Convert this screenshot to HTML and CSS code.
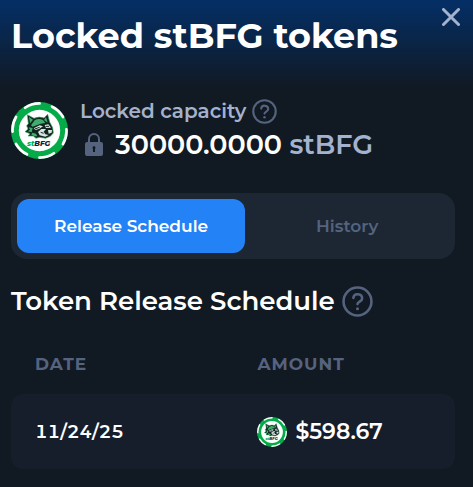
FILE: index.html
```html
<!DOCTYPE html>
<html lang="en">

<head>
	<meta charset="UTF-8">
	<meta name="viewport" content="width=device-width, initial-scale=1">
	<title>Locked stBFG tokens</title>
	<link rel="stylesheet" href="styles.css">
</head>

<body>
	<!-- Shared icons -->
	<svg class="sprite" aria-hidden="true">
		<symbol id="token" viewBox="9 9 171 171">
			<circle cx="94.5" cy="94.5" r="85.5" fill="#05ab48" />
			<g fill="none" stroke="#fff" stroke-width="8" stroke-linecap="round">
				<path id="dash" d="M132 23 Q152 32 165 54" />
				<use href="#dash" transform="rotate(60 94.5 94.5)" />
				<use href="#dash" transform="rotate(120 94.5 94.5)" />
				<use href="#dash" transform="rotate(180 94.5 94.5)" />
				<use href="#dash" transform="rotate(240 94.5 94.5)" />
				<use href="#dash" transform="rotate(300 94.5 94.5)" />
			</g>
			<circle cx="94.5" cy="94.5" r="62" fill="#fff" />
			<path fill="#12241f" stroke="#27b561" stroke-width="2" stroke-linejoin="round" d="M58 47 L78 58 Q94 51 108 57 L119 46 L125 69 L134 86 L136 102 L127 112 L113 118 L94 115 L84 118 L76 111 L60 111 L66 104 L51 98 L60 90 L56 80 L61 74 Z" />
			<path fill="#3fae6c" d="M63 54 L75 62 L66 73 Z M114 54 L119 71 L108 63 Z M80 64 Q92 57 105 63 L112 72 L98 74 L74 83 L69 79 Z M62 85 L74 87 L71 100 L59 97 L66 92 Z M73 101 L84 104 L88 112 L80 112 L70 107 Z" />
			<path fill="#d9e6e0" d="M77 88 L95 79 L105 82 L93 90 L82 93 Z M110 78 L121 76 L129 86 L114 87 Z M90 99 L100 90 L114 90 L107 98 L112 106 L122 108 L112 113 L95 109 Z M120 93 L132 93 L131 101 L122 104 Z" />
			<path fill="none" stroke="#12241f" stroke-width="3" d="M80 90 L95 85 M113 82 L123 82 M98 100 L107 103" />
			<text class="token-text" x="57" y="142"><tspan fill="#05ab48">st</tspan><tspan fill="#17202a">BFG</tspan></text>
		</symbol>
		<symbol id="help" viewBox="0 0 30 30">
			<g fill="none" stroke="currentColor" stroke-width="2.500" stroke-linecap="round" stroke-linejoin="round">
				<circle cx="15" cy="15" r="13.500" />
				<path d="M11 11.500 C11.500 6.500 19.500 7 19.500 12 C19.500 15 15 15 15 17.500" />
			</g>
			<circle cx="15" cy="22" r="1.500" fill="currentColor" />
		</symbol>
	</svg>

	<main class="modal">
		<header class="modal-header">
			<h1>Locked stBFG tokens</h1>
			<button class="close" type="button" aria-label="Close">
				<svg viewBox="0 0 18 18"><path d="M1.500 1.500 L16.500 16.500 M16.500 1.500 L1.500 16.500" /></svg>
			</button>
		</header>

		<section class="capacity">
			<svg class="token-large" aria-hidden="true"><use href="#token" /></svg>
			<div>
				<div class="capacity-label">
					<span>Locked capacity</span>
					<button class="help" type="button" aria-label="About locked capacity">
						<svg><use href="#help" /></svg>
					</button>
				</div>
				<div class="capacity-value">
					<svg class="lock" viewBox="0 0 18 24" aria-hidden="true">
						<path d="M4 10 V6 A5 5 0 0 1 14 6 V10" fill="none" stroke="#55637f" stroke-width="2" />
						<rect x="0" y="9" width="18" height="14" rx="2" fill="#55637f" />
						<path d="M9 13 A1.800 1.800 0 0 1 10 16 V19 H8 V16 A1.800 1.800 0 0 1 9 13 Z" fill="#111922" />
					</svg>
					<span><strong>30000.0000</strong> stBFG</span>
				</div>
			</div>
		</section>

		<nav class="tabs">
			<button class="tab active" type="button">Release Schedule</button>
			<button class="tab" type="button">History</button>
		</nav>

		<section class="schedule">
			<div class="schedule-title">
				<h2>Token Release Schedule</h2>
				<button class="help help-large" type="button" aria-label="About the release schedule">
					<svg><use href="#help" /></svg>
				</button>
			</div>
			<table>
				<thead>
					<tr>
						<th class="date" scope="col">Date</th>
						<th scope="col">Amount</th>
					</tr>
				</thead>
				<tbody>
					<tr>
						<td class="date">11/24/25</td>
						<td>
							<div class="amount">
								<svg class="token-small" aria-hidden="true"><use href="#token" /></svg>
								<span>$598.67</span>
							</div>
						</td>
					</tr>
				</tbody>
			</table>
		</section>
	</main>
</body>

</html>
```

FILE: styles.css
```css
* {
	box-sizing: border-box;
}

body {
	margin: 0;
	background: #111922;
	color: #fff;
	font-family: "Montserrat", "Inter", sans-serif;
}

h1,
h2 {
	margin: 0;
}

button {
	padding: 0;
	border: 0;
	background: none;
	font-family: inherit;
	cursor: pointer;
}

svg {
	display: block;
}

.sprite {
	position: absolute;
	width: 0;
	height: 0;
}

.modal {
	padding: 0 18px 18px 11px;
	background: linear-gradient(#042f66, #111922 90px);
}

.modal-header {
	display: flex;
	justify-content: space-between;
	align-items: flex-start;
	margin-right: -5px;
	padding-top: 8px;
}

h1 {
	padding-top: 6px;
	font-size: 35px;
	font-weight: 700;
	line-height: 44px;
}

.close svg {
	width: 18px;
	height: 18px;
	fill: none;
	stroke: #a3b3cf;
	stroke-width: 3;
	stroke-linecap: round;
}

/* Capacity */
.capacity {
	display: flex;
	align-items: center;
	gap: 12px;
	margin-top: 39px;
}

.token-large {
	width: 57px;
	height: 57px;
}

.token-text {
	font-family: "Montserrat", "Inter", sans-serif;
	font-size: 22px;
	font-style: italic;
	font-weight: 800;
}

.capacity-label {
	display: flex;
	align-items: center;
	gap: 6px;
	color: #a3b3cf;
	font-size: 20px;
	font-weight: 600;
	line-height: 28px;
}

.help {
	color: #55637f;
}

.help svg {
	width: 25px;
	height: 25px;
}

.help-large svg {
	width: 31px;
	height: 31px;
}

.capacity-value {
	display: flex;
	align-items: center;
	gap: 12px;
	padding-left: 5px;
	color: #a3b3cf;
	font-size: 27px;
	font-weight: 600;
	line-height: 39px;
}

.capacity-value strong {
	color: #fff;
	font-weight: 600;
}

.lock {
	width: 18px;
	height: 24px;
}

/* Tabs */
.tabs {
	display: flex;
	margin-top: 29px;
	padding: 6px;
	border-radius: 16px;
	background: #1c2733;
}

.tab {
	flex: 1;
	height: 54px;
	border-radius: 12px;
	color: #55637f;
	font-size: 17px;
	font-weight: 600;
}

.tab.active {
	flex-grow: 1.120;
	background: #2383f6;
	color: #fff;
}

/* Release schedule */
.schedule-title {
	display: flex;
	align-items: center;
	gap: 7px;
	margin-top: 26px;
}

h2 {
	font-size: 26px;
	font-weight: 600;
	line-height: 32px;
}

table {
	width: 100%;
	margin-top: 16px;
	border-collapse: separate;
	border-spacing: 0;
}

th {
	height: 61px;
	padding: 0;
	color: #55637f;
	font-size: 17px;
	font-weight: 700;
	letter-spacing: 1px;
	text-align: left;
	text-transform: uppercase;
}

td {
	height: 75px;
	padding: 0;
	background: #171e2b;
	font-size: 18px;
	font-weight: 600;
	font-variant-numeric: tabular-nums;
}

.date {
	width: 55.500%;
	padding-left: 24px;
}

td:first-child {
	border-radius: 12px 0 0 12px;
}

td:last-child {
	border-radius: 0 12px 12px 0;
}

.amount {
	display: flex;
	align-items: center;
	gap: 8px;
	font-size: 22px;
	font-variant-numeric: normal;
}

.token-small {
	width: 30px;
	height: 30px;
}
```
